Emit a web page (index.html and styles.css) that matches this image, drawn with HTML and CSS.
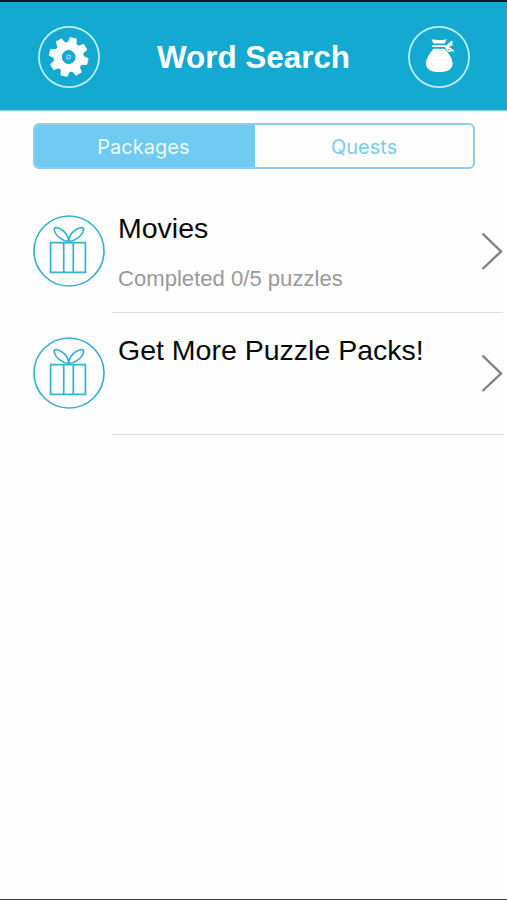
FILE: index.html
```html
<!DOCTYPE html>
<html lang="en">
<head>
<meta charset="utf-8">
<title>Word Search</title>
<link rel="stylesheet" href="styles.css">
</head>
<body>
<svg width="0" height="0" class="defs" aria-hidden="true">
  <symbol id="gift" viewBox="0 0 72 72">
    <g fill="none" stroke="#36b2d0" stroke-width="1.7">
      <circle cx="36" cy="36" r="35"/>
      <path d="M17.600 27.600H52.400V57.400H17.600ZM30.700 27.600V57.400M40.300 27.600V57.400"/>
      <path d="M35.700 26.500C29.500 26 22 20.500 21.300 14.500C21 12 24 12 27.500 14C32 16.500 35.500 21.500 35.700 26.500C35.900 21.500 39.500 16.500 44 14C47.500 12 51 12 50.600 14.500C50 20.500 42 26 35.700 26.500Z"/>
    </g>
  </symbol>
</svg>
<header class="navbar">
  <button class="round" aria-label="Settings">
    <svg viewBox="0 0 62 62">
      <g fill="#fff" transform="translate(30.700 31) rotate(14)">
        <circle r="15"/>
        <path id="tooth" d="M-5-12L-3.500-19.200Q-3.400-19.700-2.900-19.700H2.900Q3.400-19.700 3.500-19.200L5-12Z"/>
        <use href="#tooth" transform="rotate(45)"/>
        <use href="#tooth" transform="rotate(90)"/>
        <use href="#tooth" transform="rotate(135)"/>
        <use href="#tooth" transform="rotate(180)"/>
        <use href="#tooth" transform="rotate(225)"/>
        <use href="#tooth" transform="rotate(270)"/>
        <use href="#tooth" transform="rotate(315)"/>
        <circle r="6.900" fill="#13a9d0"/>
        <circle r="1.900" fill="none" stroke="#a5e2f2" stroke-width="1.100"/>
      </g>
    </svg>
  </button>
  <h1 class="title">Word Search</h1>
  <button class="round" aria-label="Coins">
    <svg viewBox="0 0 62 62">
      <path fill="#fff" d="M23.400 13.300C28 14.300 34 14.300 38.700 13.200L36.800 17.600H25.500ZM25.600 22.800H36.500C40 26.500 44.600 32 44.600 37.500C44.600 43.500 39.500 46.100 31.200 46.100C23 46.100 18 43.500 18 37.500C18 32 22.500 26.500 25.600 22.800Z"/>
      <path fill="none" stroke="#fff" stroke-width="1.700" stroke-linecap="round" stroke-linejoin="round" d="M24.800 20.200H38.500L43.800 15.700L43.500 19L39 20.700L45.300 24.700L40.500 25L37.500 20.800"/>
    </svg>
  </button>
</header>
<main>
  <nav class="segments">
    <button class="segment active">Packages</button>
    <button class="segment">Quests</button>
  </nav>
  <ul class="packs">
    <li class="pack">
      <svg class="gift"><use href="#gift"/></svg>
      <div class="info">
        <div class="text">
          <h2>Movies</h2>
          <p>Completed 0/5 puzzles</p>
        </div>
        <svg class="chevron" viewBox="0 0 22 38"><path d="M1.500 1.500L20 19.500L1.500 37"/></svg>
      </div>
    </li>
    <li class="pack">
      <svg class="gift"><use href="#gift"/></svg>
      <div class="info">
        <div class="text">
          <h2>Get More Puzzle Packs!</h2>
        </div>
        <svg class="chevron" viewBox="0 0 22 38"><path d="M1.500 1.500L20 19.500L1.500 37"/></svg>
      </div>
    </li>
  </ul>
</main>
</body>
</html>
```
FILE: styles.css
```css
* { box-sizing: border-box; margin: 0; padding: 0; }
body {
  height: 900px;
  display: flex;
  flex-direction: column;
  overflow: hidden;
  background: #fefefe;
  border-bottom: 1px solid #3c3b3e;
  font-family: "Liberation Sans", Arial, sans-serif;
}
.defs { display: none; }
button { background: none; border: 0; font: inherit; }
.navbar {
  display: flex;
  justify-content: space-between;
  height: 111px;
  padding: 24px 37px 0 38px;
  background: #13a9d0;
  border-top: 2px solid #08181e;
  border-bottom: 1px solid #8bd5e9;
}
.round {
  width: 62px;
  height: 62px;
  border-radius: 50%;
  box-shadow: inset 0 0 0 1.800px #bdeffa;
}
.round svg { display: block; width: 62px; height: 62px; }
.title {
  margin-left: -1px;
  color: #fff;
  font-size: 31.400px;
  line-height: 64px;
  font-weight: 700;
}
.segments {
  display: flex;
  height: 46px;
  margin: 12px 32px 0 32.500px;
  border: 2px solid #8acdec;
  border-radius: 6px;
  overflow: hidden;
}
.segment {
  flex: 1;
  color: #7accef;
  font: 20px/42px Inter, sans-serif;
  padding-top: 1px;
}
.segment.active { background: #70caf2; color: #effbff; padding-right: 3px; }
.packs { list-style: none; margin-top: 22px; }
.pack { display: flex; height: 122px; padding: 24px 4px 0 33px; }
.gift { width: 72px; height: 72px; flex: none; }
.info {
  flex: 1;
  display: flex;
  justify-content: space-between;
  height: 98px;
  margin-left: 7px;
  padding-left: 6px;
  border-bottom: 1px solid #dedede;
}
.text { white-space: nowrap; }
h2 { color: #080808; font-size: 28.500px; line-height: 26px; font-weight: 400; }
.text p { margin-top: 25px; color: #9a9a9a; font-size: 22.100px; line-height: 26px; }
.chevron { width: 22px; height: 38px; margin-top: 17px; }
.chevron path { fill: none; stroke: #808080; stroke-width: 2.400; }
```
